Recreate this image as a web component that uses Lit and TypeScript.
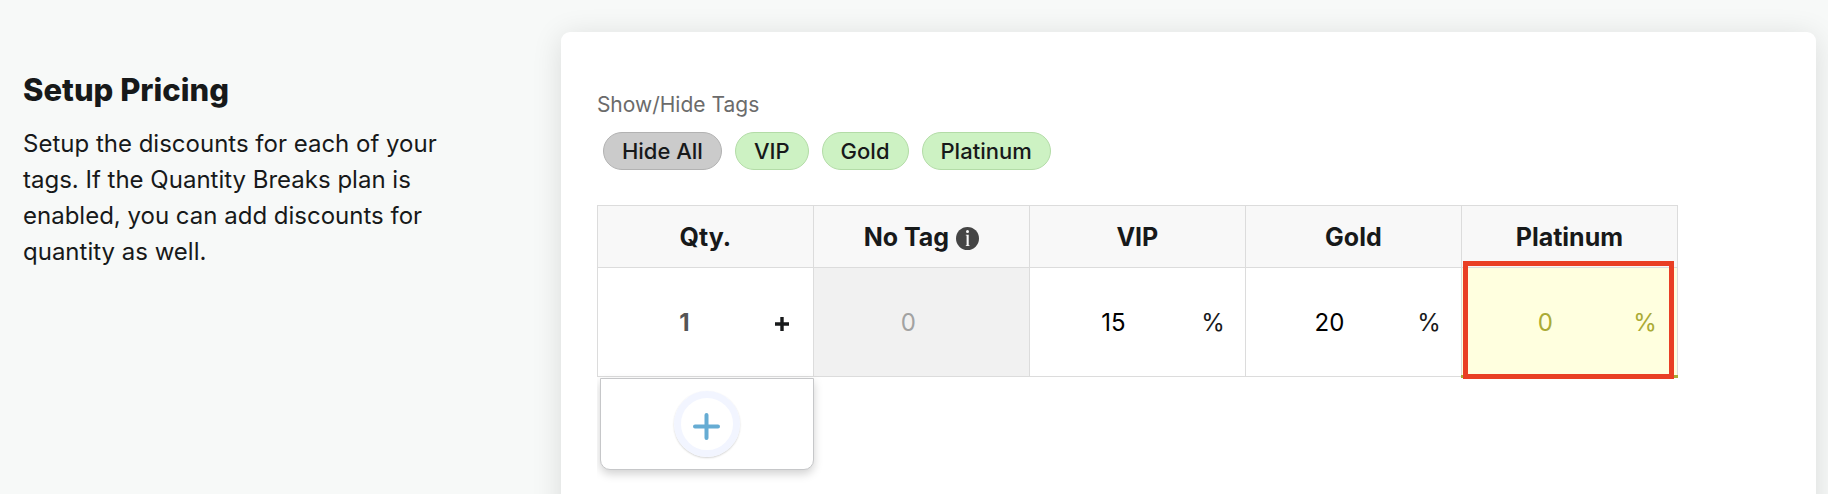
import { LitElement, html, css } from "lit";
import { customElement, property, state } from "lit/decorators.js";

interface Tag {
  name: string;
  value: string;
  changed?: boolean;
}

const TAGS: Tag[] = [
  { name: "VIP", value: "15" },
  { name: "Gold", value: "20" },
  { name: "Platinum", value: "0", changed: true },
];

@customElement("tag-filter")
class TagFilter extends LitElement {
  @property({ attribute: false }) tags: Tag[] = [];

  static styles = css`
    .label {
      margin: 0;
      font-size: 21px;
      line-height: 32px;
      color: #6b6b6b;
    }
    .chips {
      display: flex;
      flex-wrap: wrap;
      gap: 13px;
      padding: 11px 6px 35px;
    }
    .chip {
      box-sizing: border-box;
      height: 38px;
      padding: 0 18px;
      border: 1px solid #b3dca7;
      border-radius: 19px;
      background: #cdf2c3;
      color: #17191a;
      font: 500 22px/36px Inter, sans-serif;
      cursor: pointer;
    }
    .all {
      background: #cbcbcb;
      border-color: #b2b2b2;
    }
  `;

  render() {
    return html`
      <p class="label" id="tags-label">Show/Hide Tags</p>
      <div class="chips" role="group" aria-labelledby="tags-label">
        <button class="chip all" type="button">Hide All</button>
        ${this.tags.map((t) => html`<button class="chip" type="button">${t.name}</button>`)}
      </div>
    `;
  }
}

@customElement("price-table")
class PriceTable extends LitElement {
  @property({ attribute: false }) tags: Tag[] = [];

  static styles = css`
    :host {
      display: block;
      overflow: hidden;
      padding-bottom: 24px;
    }
    .grid {
      border-collapse: collapse;
      table-layout: fixed;
      width: 1081px;
      color: #17191a;
    }
    th,
    td {
      padding: 0;
      border: 1px solid #dcdcdc;
    }
    th {
      height: 61px;
      background: #f8f8f8;
      font-size: 25px;
      line-height: 36px;
      font-weight: 700;
    }
    .head {
      display: flex;
      align-items: center;
      justify-content: center;
      gap: 7px;
    }
    .info {
      display: block;
      margin-top: 4px;
    }
    td {
      height: 107px;
    }
    .cell {
      display: flex;
      align-items: center;
      padding: 2px 20px 0 0;
      font-size: 24px;
      line-height: 36px;
    }
    .value {
      flex: 1;
      min-width: 0;
      box-sizing: border-box;
      padding: 0;
      border: 0;
      outline: 0;
      background: none;
      font: 400 24px/36px Inter, sans-serif;
      text-align: center;
      color: #000;
    }
    .unit {
      width: 28px;
      text-align: right;
    }
    .qty .value {
      font-weight: 700;
      color: #555;
    }
    .more {
      display: flex;
      justify-content: flex-end;
      width: 22px;
      padding: 2px 4px 0 0;
      border: 0;
      background: none;
      cursor: pointer;
    }
    .base {
      background: #f1f1f1;
    }
    .base .cell {
      padding-right: 26px;
    }
    .base .value {
      color: #a2a2a2;
    }
    .changed {
      position: relative;
      background: #ffffdf;
      border-bottom: 3px solid #aaab35;
    }
    .changed .cell,
    .changed .value {
      color: #aaab35;
    }
    .mark {
      position: absolute;
      inset: -7px 3px -4px 1px;
      border: 5px solid #e93f24;
      pointer-events: none;
    }
    .add {
      display: flex;
      align-items: center;
      justify-content: center;
      box-sizing: border-box;
      width: 214px;
      height: 92px;
      margin-left: 3px;
      padding: 0;
      border: 1px solid #c6c7c9;
      border-radius: 0 0 10px 10px;
      background: #fff;
      box-shadow: 0 4px 10px rgba(0, 0, 0, 0.18);
      cursor: pointer;
    }
    .ring {
      display: flex;
      align-items: center;
      justify-content: center;
      box-sizing: border-box;
      width: 66px;
      height: 66px;
      border: 7px solid #f2f5ff;
      border-radius: 50%;
      box-shadow: 0 1px 2px rgba(0, 0, 0, 0.18);
    }
    .plus {
      padding-top: 4px;
    }
  `;

  render() {
    return html`
      <table class="grid">
        <thead>
          <tr>
            <th scope="col">Qty.</th>
            <th scope="col">
              <span class="head">
                No Tag
                <svg class="info" width="23" height="23" viewBox="0 0 23 23" role="img" aria-label="Info">
                  <circle cx="11.5" cy="11.5" r="11.5" fill="#454545" />
                  <circle cx="11.5" cy="4.5" r="1.5" fill="#f8f8f8" />
                  <path d="M9.8 7.8h2.9v10.4h.8v.8H9.8v-.8h.8V8.6h-.8z" fill="#f8f8f8" />
                </svg>
              </span>
            </th>
            ${this.tags.map((t) => html`<th scope="col">${t.name}</th>`)}
          </tr>
        </thead>
        <tbody>
          <tr>
            <td class="qty">
              <div class="cell">
                <input class="value" aria-label="Quantity" .value=${"1"} />
                <button class="more" type="button" aria-label="And above">
                  <svg width="14" height="14" viewBox="0 0 14 14">
                    <path d="M7 0v14M0 7h14" stroke="#17191a" stroke-width="3.4" />
                  </svg>
                </button>
              </div>
            </td>
            <td class="base">
              <div class="cell">
                <input class="value" aria-label="No tag discount" readonly .value=${"0"} />
              </div>
            </td>
            ${this.tags.map(
              (t) => html`
                <td class=${t.changed ? "changed" : ""}>
                  <div class="cell">
                    <input class="value" aria-label="${t.name} discount" .value=${t.value} />
                    <span class="unit">%</span>
                  </div>
                  ${t.changed ? html`<div class="mark"></div>` : ""}
                </td>
              `
            )}
          </tr>
        </tbody>
      </table>
      <button class="add" type="button" aria-label="Add quantity break">
        <span class="ring">
          <svg class="plus" width="27" height="27" viewBox="0 0 27 27">
            <path d="M13.5 2v23M2 13.5h23" stroke="#66acd3" stroke-width="4" stroke-linecap="round" />
          </svg>
        </span>
      </button>
    `;
  }
}

@customElement("app-root")
class AppRoot extends LitElement {
  @state() private tags = TAGS;

  static styles = css`
    :host {
      display: block;
      box-sizing: border-box;
      height: 100vh;
      overflow: hidden;
      padding: 32px 12px 0 23px;
      background: #f7f9f8;
      color: #17191a;
      font-family: Inter, sans-serif;
    }
    .page {
      display: grid;
      grid-template-columns: 3fr 7fr;
      min-height: 600px;
    }
    .intro {
      padding: 38px 80px 0 0;
    }
    .title {
      margin: 0;
      font-size: 31px;
      line-height: 40px;
      font-weight: 800;
    }
    .text {
      margin: 16px 0 0;
      font-size: 24px;
      line-height: 36px;
    }
    .card {
      box-sizing: border-box;
      min-width: 0;
      padding: 57px 36px 0;
      border-radius: 9px;
      background: #fff;
      box-shadow: 0 4px 30px rgba(0, 0, 0, 0.12);
    }
  `;

  render() {
    return html`
      <main class="page">
        <section class="intro">
          <h2 class="title">Setup Pricing</h2>
          <p class="text">
            Setup the discounts for each of your tags. If the Quantity Breaks plan is enabled, you
            can add discounts for quantity as well.
          </p>
        </section>
        <section class="card">
          <tag-filter .tags=${this.tags}></tag-filter>
          <price-table .tags=${this.tags}></price-table>
        </section>
      </main>
    `;
  }
}
